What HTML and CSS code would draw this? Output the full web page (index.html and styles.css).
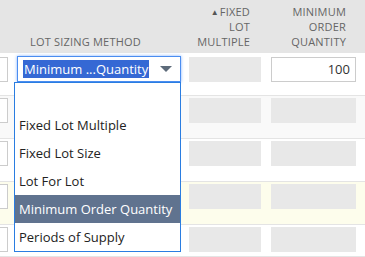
FILE: index.html
```html
<!DOCTYPE html>
<html lang="en">
<head>
  <meta charset="UTF-8" />
  <title>Lot Sizing</title>
  <link rel="stylesheet" href="styles.css">
</head>
<body>

<div class="grid">
  <div class="row head">
    <div class="cell c0"></div>
    <div class="cell c1 head-text">LOT SIZING METHOD</div>
    <div class="cell c2 head-text right"><span class="sort">&#9650;</span>FIXED<br>LOT<br>MULTIPLE</div>
    <div class="cell c3 head-text right">MINIMUM<br>ORDER<br>QUANTITY</div>
  </div>

  <div class="row first">
    <div class="cell c0"><div class="field cut"></div></div>
    <div class="cell c1 open">
      <div class="select">
        <span class="sel-text">Minimum ...Quantity</span>
        <span class="arrow"></span>
      </div>
      <ul class="menu">
        <li>&nbsp;</li>
        <li>Fixed Lot Multiple</li>
        <li>Fixed Lot Size</li>
        <li>Lot For Lot</li>
        <li class="active">Minimum Order Quantity</li>
        <li>Periods of Supply</li>
      </ul>
    </div>
    <div class="cell c2"><div class="box w2"></div></div>
    <div class="cell c3"><div class="field num">100</div></div>
  </div>

  <div class="row alt">
    <div class="cell c0"><div class="field cut"></div></div>
    <div class="cell c1"></div>
    <div class="cell c2"><div class="box w2"></div></div>
    <div class="cell c3"><div class="box w3"></div></div>
  </div>

  <div class="row">
    <div class="cell c0"><div class="field cut"></div></div>
    <div class="cell c1"></div>
    <div class="cell c2"><div class="box w2"></div></div>
    <div class="cell c3"><div class="box w3"></div></div>
  </div>

  <div class="row note">
    <div class="cell c0"><div class="field cut"></div></div>
    <div class="cell c1"></div>
    <div class="cell c2"><div class="box w2"></div></div>
    <div class="cell c3"><div class="box w3"></div></div>
  </div>

  <div class="row short">
    <div class="cell c0"><div class="field cut"></div></div>
    <div class="cell c1"></div>
    <div class="cell c2"><div class="box w2"></div></div>
    <div class="cell c3"><div class="box w3"></div></div>
  </div>

  <div class="row alt">
    <div class="cell c0"><div class="field cut"></div></div>
    <div class="cell c1"></div>
    <div class="cell c2"><div class="box w2"></div></div>
    <div class="cell c3"><div class="box w3"></div></div>
  </div>
</div>

</body>
</html>
```

FILE: styles.css
```css
body {
  margin: 0;
  font-family: 'Open Sans', sans-serif;
  color: #222;
  background: #fff;
  overflow: hidden;
}

.grid {
  width: 365px;
}

.row {
  display: flex;
  height: 40px;
  padding-top: 2px;
  border-bottom: 1px solid #e4e4e4;
  background: #fff;
}

.row.head {
  height: 45px;
  padding: 4px 0;
  border-bottom: none;
  background: #e5e5e5;
}

.row.first {
  height: 38px;
  padding-top: 4px;
}

.row.alt {
  background: #f9f9f9;
}

.row.note {
  background: #fdfdec;
}

.row.short {
  height: 29px;
}

.cell {
  box-sizing: border-box;
}

.c0 { width: 12px; }
.c1 { width: 173px; padding-left: 5px; }
.c2 { width: 80px; padding-left: 4px; }
.c3 { width: 100px; padding-left: 6px; }

.head-text {
  font-size: 11px;
  line-height: 15px;
  color: #666;
  letter-spacing: 0.2px;
}

.head .c1 {
  align-self: flex-end;
  padding-left: 18px;
}

.head .right {
  text-align: right;
  padding-left: 0;
}

.head .c2 { padding-right: 15px; }
.head .c3 { padding-right: 19px; }

.sort {
  font-size: 8px;
  vertical-align: 1px;
  margin-right: 1px;
  color: #555;
}

.field {
  box-sizing: border-box;
  height: 25px;
  border: 1px solid #ccc;
  background: #fff;
}

.field.cut {
  width: 8px;
  border-left: none;
}

.field.num {
  width: 85px;
  font-size: 13px;
  line-height: 23px;
  text-align: right;
  padding-right: 5px;
  color: #333;
}

.box {
  height: 25px;
  background: #e8e8e8;
}

.w2 { width: 72px; }
.w3 { width: 85px; }

.open {
  position: relative;
}

.select {
  box-sizing: border-box;
  width: 164px;
  height: 26px;
  margin-top: -1px;
  border: 1px solid #4a8df0;
  box-shadow: 0 0 3px rgba(77, 144, 254, 0.7);
  background: #fff;
  display: flex;
  align-items: center;
  padding-left: 5px;
}

.sel-text {
  background: #3568d4;
  color: #fff;
  font-size: 13px;
  line-height: 18px;
  padding: 0 1px;
}

.arrow {
  margin-left: auto;
  margin-right: 8px;
  width: 0;
  height: 0;
  border-left: 6px solid transparent;
  border-right: 6px solid transparent;
  border-top: 6px solid #5d6b7a;
}

.menu {
  position: absolute;
  left: 2px;
  top: 25px;
  z-index: 2;
  width: 165px;
  margin: 0;
  padding: 0;
  list-style: none;
  border: 1px solid #2a7de1;
  background: #fff;
}

.menu li {
  height: 28px;
  line-height: 28px;
  padding-left: 4px;
  font-size: 13px;
  color: #222;
}

.menu li.active {
  background: #60738f;
  color: #fff;
}
```
